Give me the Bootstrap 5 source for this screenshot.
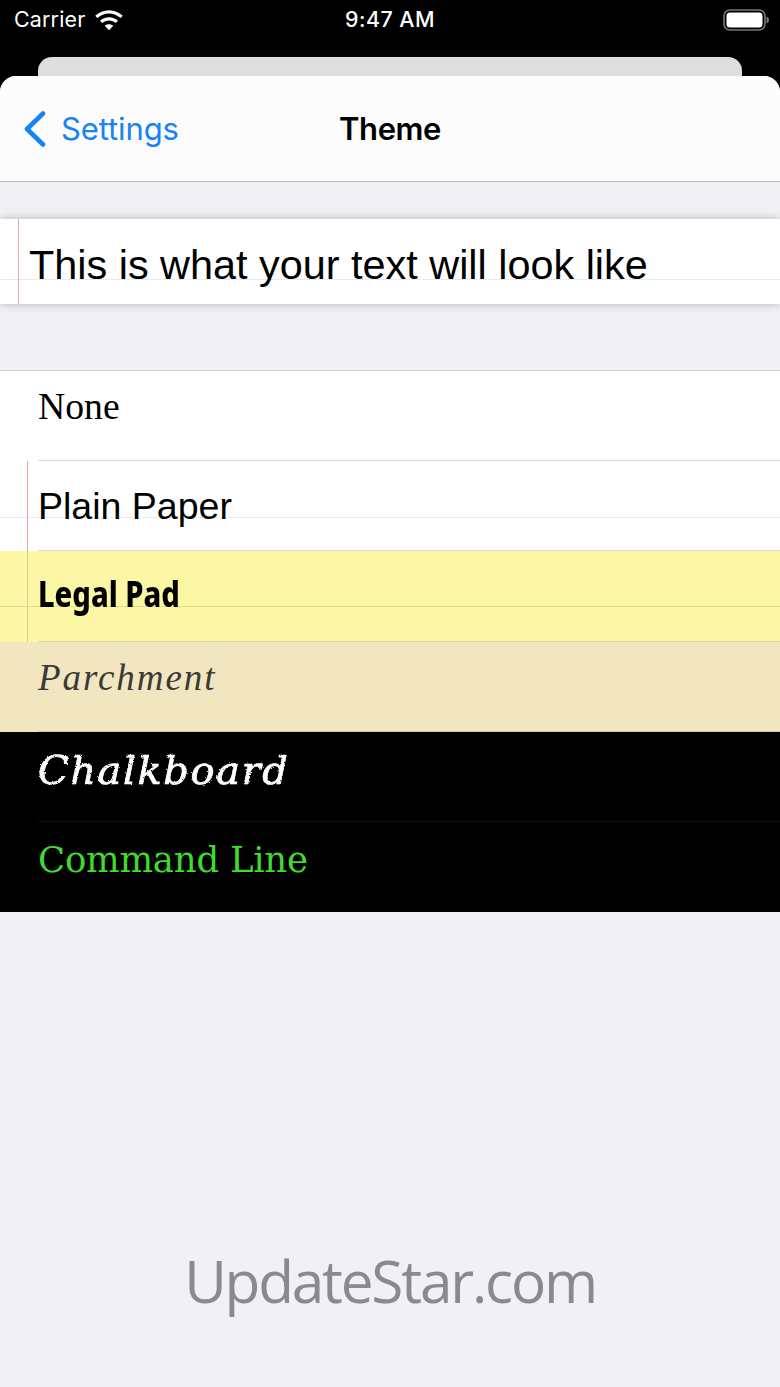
<!DOCTYPE html>
<html lang="en">
<head>
<meta charset="utf-8">
<title>Theme</title>
<link href="https://cdn.jsdelivr.net/npm/bootstrap@5.3.0/dist/css/bootstrap.min.css" rel="stylesheet">
<style>
html,body{height:100%;margin:0;background:#000;overflow:hidden}
.phone{width:780px;height:1387px;background:#000;font-family:Inter,"Liberation Sans",sans-serif}
.status-bar{height:57px;color:#fff;padding:0 10px 17px 14px;font-size:21.4px;line-height:1}
.status-bar .carrier{width:330px;letter-spacing:.2px;gap:9px}
.status-bar .clock{width:92px;white-space:nowrap;font-weight:500;letter-spacing:.5px;text-align:center}
.back-sheet{height:19px;margin:0 38px;background:#dedee0;border-radius:14px 14px 0 0}
.sheet{height:1311px;background:#f0f0f5;border-radius:16px 16px 0 0;overflow:hidden;display:flex;flex-direction:column}
.top-nav{height:106px;padding:0 0 0 23px;background:#fcfcfd;border-bottom:1px solid #bcbcc0;position:relative}
.back-link{color:#1783f6;font-size:31px;letter-spacing:-.1px;text-decoration:none;gap:14px;line-height:1}
.nav-heading{position:absolute;left:0;right:0;text-align:center;font-size:31px;font-weight:600;color:#000;letter-spacing:-.4px;line-height:1}
.preview{height:85px;margin-top:37px;padding:9px 0 0 29px;background-color:#fff;background-image:linear-gradient(90deg,transparent 18px,#f0a8a8 18px,#f0a8a8 19px,transparent 19px),linear-gradient(180deg,transparent 60px,#e3eef2 60px,#e3eef2 61px,transparent 61px);box-shadow:0 0 9px rgba(0,0,0,.24);font-family:"Liberation Sans",Arial,sans-serif;font-size:41.4px;color:#000;line-height:1}
.theme-list{margin-top:66px;border-top:1px solid #d4d4d8;border-radius:0}
.theme-row{height:90.2px;border:0;border-radius:0!important;padding:0 0 0 38px;display:flex;align-items:center;position:relative;background:#fff;margin:0;color:#000}
.theme-row::after{content:"";position:absolute;left:38px;right:0;bottom:0;height:1px;background:#dcdce0}
.row-none{font-family:"Liberation Serif",serif;font-size:37.700px;padding-bottom:19px}
.row-plain{font-family:"Liberation Sans",sans-serif;font-size:37.500px;padding-bottom:1px;background-image:linear-gradient(90deg,transparent 27px,#f3a9a0 27px,#f3a9a0 28px,transparent 28px),linear-gradient(180deg,transparent 56px,#e3eef2 56px,#e3eef2 57px,transparent 57px)}
.row-legal{background-color:#fbf7a5;background-image:linear-gradient(90deg,transparent 27px,#d9c890 27px,#d9c890 28px,transparent 28px),linear-gradient(180deg,transparent 55px,#dfdb98 55px,#dfdb98 56px,transparent 56px);font-family:"Noto Sans",sans-serif;font-weight:800;font-size:36px;padding-bottom:4px}
.row-legal::after{background:#dcd9a0}
.legal-text{display:inline-block;white-space:nowrap;transform:scaleX(.81);transform-origin:left center}
.row-parchment{background:#f2e6c0;color:#3a3a36;font-family:"Liberation Serif",serif;font-style:italic;font-size:37px;letter-spacing:1.950px;padding-bottom:18px}
.row-parchment::after{background:#cfc6a6}
.row-chalk{background:#000;color:#fff;font-family:"DejaVu Serif",serif;font-style:italic;font-size:40px;letter-spacing:1.600px;padding-bottom:14px}
.row-chalk::after{background:#111}
.chalk-text{display:inline-block;-webkit-text-stroke:.7px #fff;filter:url(#chalk)}
.row-command{background:#000;color:#3fdc2e;font-family:"DejaVu Serif",serif;font-size:35.500px;letter-spacing:-.25px;padding-bottom:14px}
.row-command::after{display:none}
.watermark{margin-top:339px;color:#8a8a8e;font-family:"Open Sans","Noto Sans",sans-serif;font-size:58.5px;line-height:1;text-align:center;letter-spacing:-2.200px}
</style>
</head>
<body>
<div class="phone">
  <div class="status-bar d-flex align-items-center">
    <div class="carrier d-flex align-items-center">
      <span>Carrier</span>
      <svg width="28" height="20.500" viewBox="1.500 0 26 18.800" aria-hidden="true"><path fill="#fff" d="M14.500 3.200c4.100 0 7.900 1.600 10.800 4.200l2-2.200C23.800 2 19.300 0 14.500 0S5.200 2 1.700 5.200l2 2.200c2.900-2.600 6.700-4.200 10.800-4.200zM14.500 9.600c2.400 0 4.600.9 6.300 2.400l2.100-2.200c-2.300-2-5.200-3.300-8.400-3.300s-6.100 1.300-8.400 3.300L8.200 12c1.700-1.500 3.900-2.400 6.300-2.400zM14.500 13.100c-1.500 0-2.800.5-3.900 1.400l3.900 4.200 3.900-4.200c-1.100-.9-2.400-1.400-3.900-1.400z"/></svg>
    </div>
    <div class="clock">9:47 AM</div>
    <div class="ms-auto d-flex">
      <svg width="47" height="22" viewBox="0 0 47 22" aria-hidden="true"><rect x="1" y="1" width="41" height="20" rx="6" fill="none" stroke="#77777a" stroke-width="1.600"/><rect x="3.500" y="3.500" width="36" height="15" rx="3.500" fill="#fff"/><path d="M43.500 7.500v7c1.500-.3 2.500-1.800 2.500-3.500s-1-3.200-2.500-3.500z" fill="#77777a"/></svg>
    </div>
  </div>
  <div class="back-sheet"></div>
  <div class="sheet">
    <nav class="top-nav d-flex align-items-center">
      <a class="back-link d-flex align-items-center" href="#">
        <svg width="24" height="36" viewBox="0 0 24 36" aria-hidden="true"><path d="M20 2.500 4 18l16 15.500" fill="none" stroke="#1783f6" stroke-width="4.600" stroke-linecap="round" stroke-linejoin="round"/></svg>
        <span>Settings</span>
      </a>
      <div class="nav-heading">Theme</div>
    </nav>
    <div class="preview d-flex align-items-center">This is what your text will look like</div>
    <ul class="list-group theme-list">
      <li class="list-group-item theme-row row-none">None</li>
      <li class="list-group-item theme-row row-plain">Plain Paper</li>
      <li class="list-group-item theme-row row-legal"><span class="legal-text">Legal Pad</span></li>
      <li class="list-group-item theme-row row-parchment">Parchment</li>
      <li class="list-group-item theme-row row-chalk"><span class="chalk-text">Chalkboard</span></li>
      <li class="list-group-item theme-row row-command">Command Line</li>
    </ul>
    <div class="watermark">UpdateStar.com</div>
  </div>
</div>
<svg width="0" height="0" class="d-block" aria-hidden="true"><filter id="chalk"><feTurbulence type="fractalNoise" baseFrequency=".55" numOctaves="2" seed="4"/><feDisplacementMap in="SourceGraphic" scale="2.500"/></filter></svg>
<script src="https://cdn.jsdelivr.net/npm/bootstrap@5.3.0/dist/js/bootstrap.bundle.min.js"></script>
</body>
</html>
